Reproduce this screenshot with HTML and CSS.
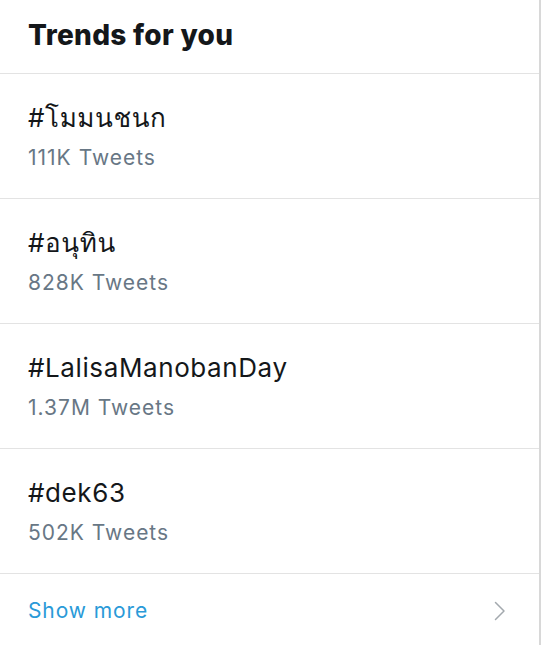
FILE: index.html
```html
<!DOCTYPE html>
<html>
<head>
<meta charset="utf-8">
<link rel="stylesheet" href="styles.css">
</head>
<body>
<div class="panel">
  <div class="header"><h2 class="title">Trends for you</h2></div>
  <div class="trend">
    <div class="name">#โมมนชนก</div>
    <div class="count">111K Tweets</div>
  </div>
  <div class="trend">
    <div class="name">#อนุทิน</div>
    <div class="count">828K Tweets</div>
  </div>
  <div class="trend">
    <div class="name">#LalisaManobanDay</div>
    <div class="count">1.37M Tweets</div>
  </div>
  <div class="trend">
    <div class="name">#dek63</div>
    <div class="count">502K Tweets</div>
  </div>
  <div class="more">
    <span class="more-text">Show more</span>
    <svg class="chev" width="12" height="20" viewBox="0 0 12 20"><path d="M1.5 1.5 L10 10 L1.5 18.5" fill="none" stroke="#a3a9ae" stroke-width="1.5" stroke-linecap="round" stroke-linejoin="round"/></svg>
  </div>
</div>
</body>
</html>
```
FILE: styles.css
```css
html, body {
  margin: 0;
  padding: 0;
  background: #ffffff;
}
body {
  font-family: Inter, "Loma", "Garuda", "Noto Sans Thai Looped", "Noto Sans", "Noto Sans Thai", "DejaVu Sans", sans-serif;
  color: #14171a;
}
.panel {
  width: 539px;
  height: 645px;
  border-right: 2px solid #d8d8d8;
  display: flex;
  flex-direction: column;
}
.header {
  height: 74px;
  box-sizing: border-box;
  padding: 17px 28px 0;
  border-bottom: 1px solid #e3e3e3;
}
.title {
  margin: 0;
  font-size: 28px;
  line-height: 36px;
  font-weight: 800;
  letter-spacing: 0.3px;
}
.trend {
  height: 125px;
  box-sizing: border-box;
  padding: 26px 28px 0;
  border-bottom: 1px solid #e3e3e3;
}
.name {
  font-size: 26px;
  line-height: 36px;
  font-weight: 400;
  letter-spacing: 0.6px;
  color: #14171a;
}
.count {
  font-size: 21px;
  line-height: 26px;
  letter-spacing: 1px;
  color: #687785;
  margin-top: 9px;
}
.more {
  flex: 1;
  display: flex;
  align-items: center;
  justify-content: space-between;
  padding: 0 33px 0 28px;
}
.more-text {
  font-size: 21px;
  letter-spacing: 0.9px;
  color: #2a9ad8;
  margin-top: 2px;
}
.chev {
  display: block;
  margin-top: 2px;
}
```
